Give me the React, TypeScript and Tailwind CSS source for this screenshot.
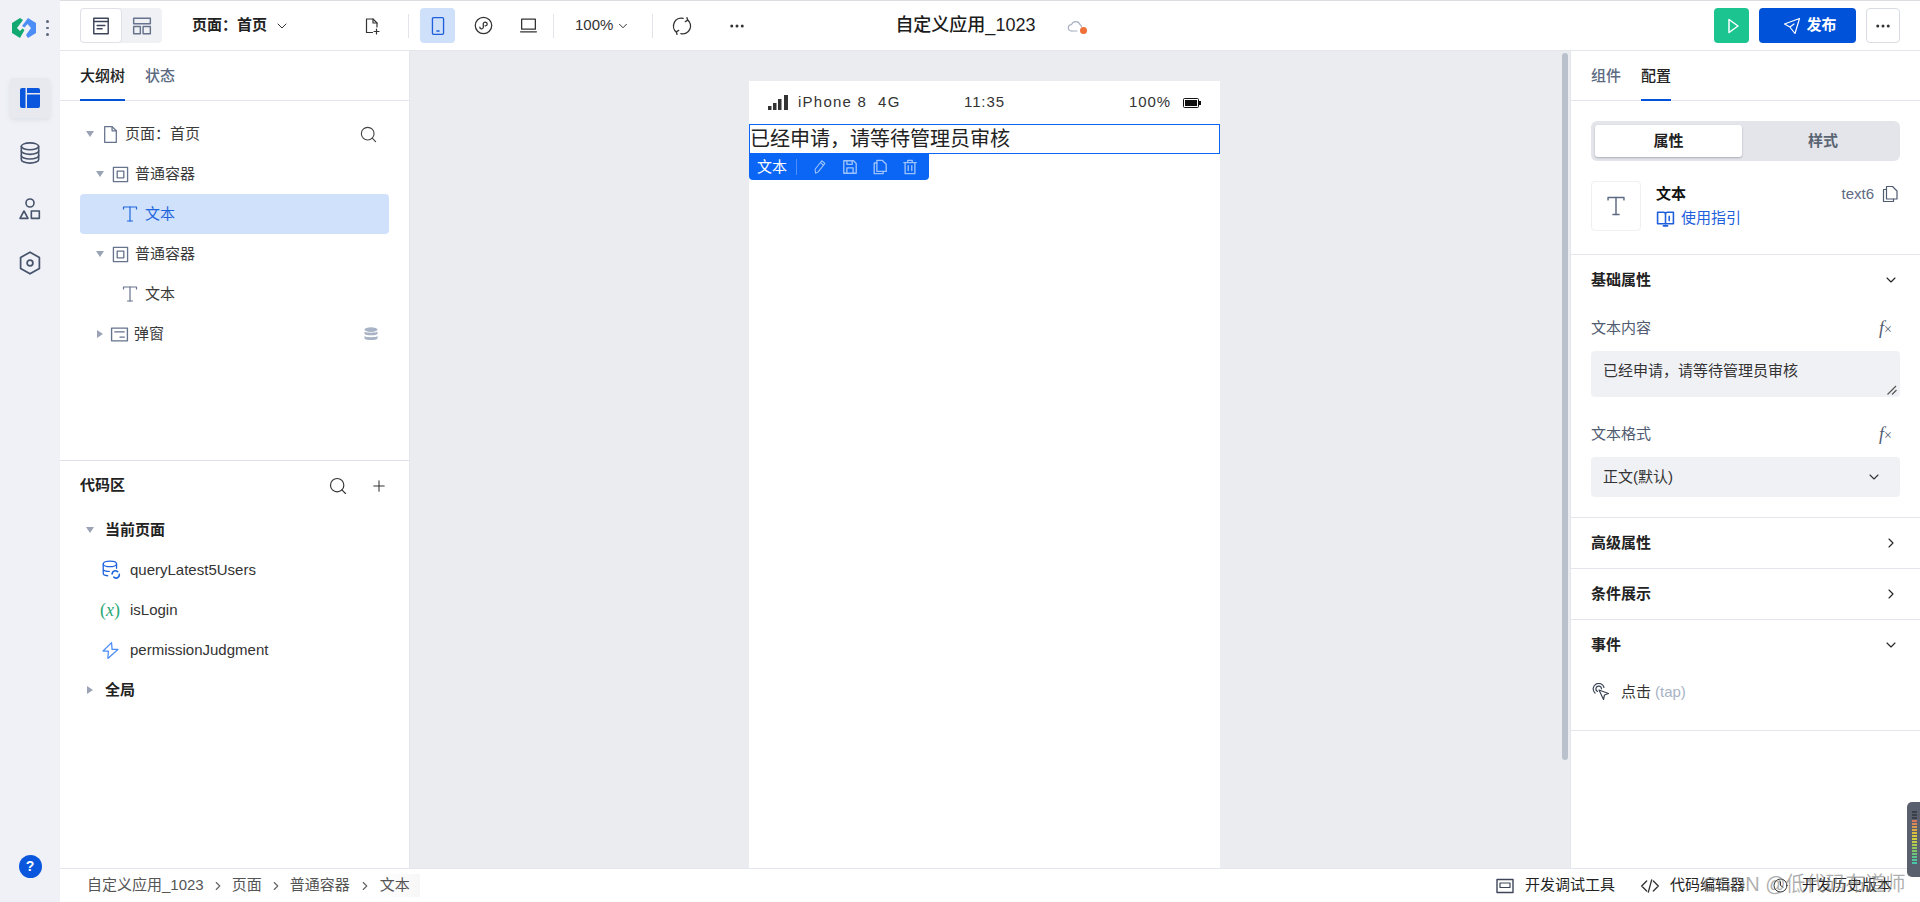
import {
  ChevronDown,
  ChevronRight,
  Ellipsis,
  Plus,
  Search,
} from 'lucide-react';
import type { ReactNode } from 'react';

const FONT = "font-['Liberation_Sans','Noto_Sans_CJK_SC',sans-serif]";

function Svg({ size = 18, children, className = '' }: { size?: number; children: ReactNode; className?: string }) {
  return (
    <svg
      width={size}
      height={size}
      viewBox="0 0 18 18"
      fill="none"
      stroke="currentColor"
      strokeWidth="1.2"
      strokeLinecap="round"
      strokeLinejoin="round"
      className={`shrink-0 ${className}`}
    >
      {children}
    </svg>
  );
}

function Logo() {
  return (
    <svg width="24" height="20" viewBox="0 0 24 20" className="shrink-0">
      <path d="M0 5 L8 0 L11 2 L5 10 L8 13 L10.5 10.5 L12.5 12 L8 20 L0 15 Z" fill="#12a871" />
      <path d="M24 5 L16 0 L10 8 L12.5 9.5 L15.5 6 L19 10 L14 17 L16 20 L24 15 Z" fill="#4d8df6" />
    </svg>
  );
}

function FileIcon({ size = 18 }: { size?: number }) {
  return (
    <Svg size={size}>
      <path d="M3.5 1.5 H10.5 L14.5 5.5 V16.5 H3.5 Z" />
      <path d="M10.5 1.5 V5.5 H14.5" />
    </Svg>
  );
}

function TextIcon({ size = 18, className = '' }: { size?: number; className?: string }) {
  return (
    <Svg size={size} className={className}>
      <path d="M2.5 4 V2 H15.5 V4" />
      <path d="M9 2 V16" />
      <path d="M6.5 16 H11.5" />
    </Svg>
  );
}

function ContainerIcon() {
  return (
    <Svg size={17} className="text-[#66738c]">
      <rect x="1.5" y="1.5" width="15" height="15" strokeWidth="1.4" />
      <rect x="5.5" y="5.5" width="7" height="7" strokeWidth="1.4" />
    </Svg>
  );
}

function Tri({ open = true }: { open?: boolean }) {
  return (
    <span
      className={
        open
          ? 'h-0 w-0 shrink-0 border-x-[4px] border-t-[6px] border-x-transparent border-t-[#9aa3b5]'
          : 'h-0 w-0 shrink-0 border-y-[4px] border-l-[6px] border-y-transparent border-l-[#9aa3b5]'
      }
    />
  );
}

function Rail() {
  return (
    <aside className="flex w-[60px] shrink-0 flex-col items-center bg-[#eff1f6] text-[#46536b]">
      <div className="mt-[18px] flex h-5 w-full items-center pl-3">
        <Logo />
        <span className="ml-[10px] flex flex-col gap-[4px]">
          <i className="block h-[2.5px] w-[2.5px] rounded-full bg-[#59657a]" />
          <i className="block h-[2.5px] w-[2.5px] rounded-full bg-[#59657a]" />
          <i className="block h-[2.5px] w-[2.5px] rounded-full bg-[#59657a]" />
        </span>
      </div>
      <div className="mt-10 flex h-10 w-10 items-center justify-center rounded-[4px] bg-[#e7e9ef] shadow-[0_2px_5px_rgba(100,110,130,0.12)]">
        <svg width="20" height="20" viewBox="0 0 20 20" className="text-[#0a56dd]">
          <path d="M2 0 H5.5 V20 H2 A2 2 0 0 1 0 18 V2 A2 2 0 0 1 2 0 Z" fill="currentColor" />
          <path d="M7 0 H18 A2 2 0 0 1 20 2 V5 H7 Z" fill="currentColor" />
          <path d="M7 6.5 H20 V18 A2 2 0 0 1 18 20 H7 Z" fill="currentColor" />
        </svg>
      </div>
      <div className="mt-[20px] flex h-[30px] items-center">
        <Svg size={24}>
          <ellipse cx="9" cy="4" rx="6.5" ry="2.6" />
          <path d="M2.5 4 V14 C2.5 15.4 5.4 16.6 9 16.6 C12.6 16.6 15.5 15.4 15.5 14 V4" />
          <path d="M2.5 7.5 C2.5 8.9 5.4 10 9 10 C12.6 10 15.5 8.9 15.5 7.5" />
          <path d="M2.5 11 C2.5 12.4 5.4 13.5 9 13.5 C12.6 13.5 15.5 12.4 15.5 11" />
        </Svg>
      </div>
      <div className="mt-[26px] flex h-[30px] items-center">
        <Svg size={24}>
          <circle cx="9" cy="4.5" r="3" />
          <path d="M4.5 10.5 L7.5 16 H1.5 Z" />
          <rect x="10" y="10.5" width="6" height="5.5" />
        </Svg>
      </div>
      <div className="mt-[24px] flex h-[30px] items-center">
        <Svg size={26}>
          <path d="M9 1.5 L15.5 5.2 V12.8 L9 16.5 L2.5 12.8 V5.2 Z" />
          <circle cx="9" cy="9" r="2" />
        </Svg>
      </div>
      <div className="mt-auto mb-[24px] flex h-[23px] w-[23px] items-center justify-center rounded-full bg-[#0a56dd] text-[14px] font-bold text-white">
        ?
      </div>
    </aside>
  );
}

function ToolSep() {
  return <span className="block h-6 w-px shrink-0 bg-[#e3e5ea]" />;
}

function TopBar() {
  return (
    <header className="flex h-[51px] shrink-0 items-center border-t border-b border-t-[#dcdde0] border-b-[#e4e6eb] bg-white text-[#333]">
      <div className="ml-5 flex h-[35px] w-[82px] rounded-[4px] bg-[#f0f1f5]">
        <span className="flex w-[42px] items-center justify-center rounded-[4px] border border-[#dfe1e7] bg-white text-[#3d4658]">
          <Svg size={20}>
            <rect x="2.5" y="2" width="13" height="14" strokeWidth="1.3" />
            <path d="M2.5 5 H15.5 M5.5 8.5 H12.5 M5.5 11.5 H10" strokeWidth="1.3" />
          </Svg>
        </span>
        <span className="flex flex-1 items-center justify-center text-[#66738c]">
          <Svg size={20}>
            <rect x="1.5" y="2" width="15" height="5" strokeWidth="1.3" />
            <rect x="1.5" y="9.5" width="6" height="6.5" strokeWidth="1.3" />
            <rect x="10" y="9.5" width="6.5" height="6.5" strokeWidth="1.3" />
          </Svg>
        </span>
      </div>
      <span className="ml-[30px] w-[75px] text-[15px] font-bold text-[#222]">页面：首页</span>
      <ChevronDown size={16} strokeWidth={1.5} className="ml-[7px] text-[#333]" />
      <span className="ml-[73px] text-[#333]">
        <Svg size={18}>
          <path d="M9.5 15.5 H3.5 V2 H10 L14 6 V10" />
          <path d="M10 2 V6 H14" />
          <path d="M13.5 12 V17 M11 14.5 H16" />
        </Svg>
      </span>
      <span className="ml-[27px]">
        <ToolSep />
      </span>
      <span className="ml-[11px] flex h-[35px] w-[35px] items-center justify-center rounded-[4px] bg-[#cfe0fb] text-[#1f5fdc]">
        <Svg size={20}>
          <rect x="4" y="1.5" width="10" height="15" rx="1" />
          <path d="M8 13.5 H10" />
        </Svg>
      </span>
      <span className="ml-[19px] text-[#333]">
        <Svg size={19}>
          <circle cx="9" cy="9" r="7.8" />
          <path d="M5.5 10.5 C5.5 12.5 8 13 8.8 11 V7 C9.5 5 12.5 5.5 12.5 7.5 C12.5 9 11 9.5 10.5 9.3" />
        </Svg>
      </span>
      <span className="ml-[26px] text-[#333]">
        <Svg size={19}>
          <rect x="2.5" y="3" width="13" height="9.5" />
          <path d="M1.5 15 H16.5" />
        </Svg>
      </span>
      <span className="ml-[15px]">
        <ToolSep />
      </span>
      <span className="ml-[21px] text-[15px] text-[#333]">100%</span>
      <ChevronDown size={14} strokeWidth={1.7} className="ml-[3px] text-[#333]" />
      <span className="ml-[22px]">
        <ToolSep />
      </span>
      <span className="ml-[19px] text-[#333]">
        <Svg size={20}>
          <path d="M4 14.5 A7 7 0 0 1 10 2.2" />
          <path d="M14 3.5 A7 7 0 0 1 8 15.8" />
          <path d="M13.5 1.5 L14 3.8 L12 5" />
          <path d="M4.5 16.5 L4 14.2 L6 13" />
        </Svg>
      </span>
      <Ellipsis size={18} className="ml-[36px]" />
      <span className="ml-[149px] text-[18px] font-medium text-[#1c1c1c]">自定义应用_1023</span>
      <span className="relative ml-[32px] text-[#a9b2c2]">
        <Svg size={18}>
          <path d="M5 14 H4.5 A3.2 3.2 0 0 1 4.5 7.6 A4.5 4.5 0 0 1 13 7.5 A3.2 3.2 0 0 1 14.5 10" />
          <path d="M5 14 H10" />
        </Svg>
        <i className="absolute right-[-2px] bottom-[1px] block h-[7px] w-[7px] rounded-full bg-[#f0703a]" />
      </span>
      <span className="ml-[629px] flex h-[35px] w-[35px] items-center justify-center rounded-[4px] bg-[#1cc490] text-white">
        <Svg size={18} className="translate-x-px">
          <path d="M5 2.5 L14 9 L5 15.5 Z" strokeWidth="1.5" />
        </Svg>
      </span>
      <span className="ml-[10px] flex h-[35px] w-[97px] items-center rounded-[4px] bg-[#0052d9] pl-[24px] text-white">
        <Svg size={18}>
          <path d="M16.5 1.5 L1.5 7 L7 10 L11 7 M16.5 1.5 L12 16.5 L8 11.5 L7 10" />
        </Svg>
        <span className="ml-[5px] text-[15px] font-bold">发布</span>
      </span>
      <span className="ml-[10px] flex h-[35px] w-[34px] items-center justify-center rounded-[4px] border border-[#d8dbe3] bg-white text-[#333]">
        <Ellipsis size={18} />
      </span>
    </header>
  );
}

function TreeRow({
  pad,
  children,
  active = false,
}: {
  pad: string;
  children: ReactNode;
  active?: boolean;
}) {
  return (
    <div
      className={`flex h-10 items-center rounded-[4px] text-[15px] ${pad} ${
        active ? 'bg-[#d0e1fb] text-[#1f66dd]' : 'text-[#3a3a3a]'
      }`}
    >
      {children}
    </div>
  );
}

function PanelTabs({ left, right, active }: { left: string; right: string; active: 'left' | 'right' }) {
  const on = 'relative flex h-full items-center pt-[2px] font-medium text-[#222] after:absolute after:bottom-[-1px] after:left-0 after:h-[2px] after:w-full after:bg-[#0052d9]';
  const off = 'flex h-full items-center pt-[2px] font-medium text-[#5c6a82]';
  return (
    <div className="flex h-[50px] shrink-0 gap-5 border-b border-[#e4e6eb] px-5 text-[15px]">
      <span className={active === 'left' ? on : off}>{left}</span>
      <span className={active === 'right' ? on : off}>{right}</span>
    </div>
  );
}

function LeftPanel() {
  return (
    <aside className="flex w-[350px] shrink-0 flex-col border-r border-[#e4e6eb] bg-white">
      <PanelTabs left="大纲树" right="状态" active="left" />
      <div className="h-[359px] shrink-0 px-5 pt-[13px]">
        <TreeRow pad="pl-[6px]">
          <Tri />
          <span className="ml-[7px] text-[#66738c]">
            <FileIcon size={19} />
          </span>
          <span className="ml-[5px]">页面：首页</span>
          <Search size={19} strokeWidth={1.4} className="mr-[11px] ml-auto text-[#444]" />
        </TreeRow>
        <TreeRow pad="pl-4">
          <Tri />
          <span className="ml-[8px] flex">
            <ContainerIcon />
          </span>
          <span className="ml-[6px]">普通容器</span>
        </TreeRow>
        <TreeRow pad="pl-[41px]" active>
          <TextIcon size={18} className="text-[#1f66dd]" />
          <span className="ml-[6px]">文本</span>
        </TreeRow>
        <TreeRow pad="pl-4">
          <Tri />
          <span className="ml-[8px] flex">
            <ContainerIcon />
          </span>
          <span className="ml-[6px]">普通容器</span>
        </TreeRow>
        <TreeRow pad="pl-[41px]">
          <TextIcon size={18} className="text-[#66738c]" />
          <span className="ml-[6px]">文本</span>
        </TreeRow>
        <TreeRow pad="pl-[17px]">
          <Tri open={false} />
          <span className="ml-[7px] text-[#66738c]">
            <Svg size={19}>
              <rect x="1.5" y="3" width="15" height="12" strokeWidth="1.3" />
              <path d="M4.5 6.5 H13.5 M9.5 11.5 H13.5" strokeWidth="1.3" />
            </Svg>
          </span>
          <span className="ml-[5px]">弹窗</span>
          <svg width="14" height="14" viewBox="0 0 14 14" className="mr-[11px] ml-auto" fill="#a9b3c6">
            <ellipse cx="7" cy="2.6" rx="6.5" ry="2.4" />
            <path d="M0.5 4.6 C1.5 6.2 12.5 6.2 13.5 4.6 V7 C12.5 8.8 1.5 8.8 0.5 7 Z" />
            <path d="M0.5 9 C1.5 10.6 12.5 10.6 13.5 9 V11.4 C12.5 13.4 1.5 13.4 0.5 11.4 Z" />
          </svg>
        </TreeRow>
      </div>
      <div className="flex-1 border-t border-[#dfe1e9]">
        <div className="flex h-[49px] items-center pr-[21px] pl-5">
          <span className="text-[15px] font-bold text-[#222]">代码区</span>
          <Search size={20} strokeWidth={1.4} className="mr-[22px] ml-auto text-[#333]" />
          <Plus size={18} strokeWidth={1.4} className="text-[#333]" />
        </div>
        <div className="px-5 text-[15px] text-[#333]">
          <div className="flex h-10 items-center pl-[6px] font-bold text-[#222]">
            <Tri />
            <span className="ml-[11px]">当前页面</span>
          </div>
          <div className="flex h-10 items-center pl-[21px]">
            <span className="text-[#1f66dd]">
              <Svg size={20}>
                <ellipse cx="8" cy="3.5" rx="6" ry="2.5" />
                <path d="M2 3.5 V12 C2 13 3.5 14 6 14.2 M14 3.5 V7.5 M2 8 C2 9.2 4.5 10.2 7.5 10.2" />
                <path d="M10 12.5 A3 3 0 0 1 15 10.5 M16.5 13 A3 3 0 0 1 11.5 15.5" strokeWidth="1.5" />
              </Svg>
            </span>
            <span className="ml-[9px]">queryLatest5Users</span>
          </div>
          <div className="flex h-10 items-center pl-[20px]">
            <span className="flex w-5 justify-center font-['Liberation_Serif',serif] text-[18px] text-[#2aa876]">
              (<span className="italic">x</span>)
            </span>
            <span className="ml-[10px]">isLogin</span>
          </div>
          <div className="flex h-10 items-center pl-[21px]">
            <span className="text-[#4d8df6]">
              <Svg size={19}>
                <path d="M10 1.5 L2 9.5 H7 L6.5 16.5 L16 8 H10.5 Z" />
              </Svg>
            </span>
            <span className="ml-[10px]">permissionJudgment</span>
          </div>
          <div className="flex h-10 items-center pl-[7px] font-bold text-[#222]">
            <Tri open={false} />
            <span className="ml-[12px]">全局</span>
          </div>
        </div>
      </div>
    </aside>
  );
}

function Canvas() {
  return (
    <main className="relative flex min-w-0 flex-1 bg-[#ebecf0] pt-[30px] pl-[339px]">
      <div className="w-[471px] bg-white">
        <div className="flex h-[43px] items-center pl-[19px] text-[15px] tracking-[0.9px] text-[#333]">
          <svg width="20" height="15" viewBox="0 0 20 15" fill="#333" className="shrink-0">
            <rect x="0" y="11" width="3.5" height="4" />
            <rect x="5" y="8" width="3.5" height="7" />
            <rect x="10" y="4" width="3.5" height="11" />
            <rect x="16" y="0" width="4" height="15" />
          </svg>
          <span className="ml-[10px] w-[166px] tracking-[1.25px] whitespace-pre">iPhone 8  4G</span>
          <span className="w-[165px]">11:35</span>
          <span className="w-[54px]">100%</span>
          <svg width="18" height="10" viewBox="0 0 18 10" className="shrink-0">
            <rect x="0.5" y="0.5" width="15" height="9" rx="1" fill="#fff" stroke="#111" />
            <rect x="2" y="2" width="12" height="6" fill="#111" />
            <rect x="16" y="3" width="2" height="4" fill="#111" />
          </svg>
        </div>
        <div className="h-[30px] border border-[#0b66f5] text-[20px] leading-[28px] text-[#222]">
          已经申请，请等待管理员审核
        </div>
        <div className="flex h-[26px] w-[180px] items-center rounded-b-[4px] bg-[#0b66f5] pl-2 text-[15px] text-white">
          <span className="w-[30px]">文本</span>
          <span className="ml-[9px] h-4 w-px bg-[#4d8ff8]" />
          <span className="ml-[15px] text-[#9cc3fb]">
            <Svg size={16}>
              <path d="M4 16 L3.5 11.5 L11 2 L14.5 5 L7 14.5 Z" />
              <path d="M9.5 4 L13 7" />
            </Svg>
          </span>
          <span className="ml-[14px] text-[#9cc3fb]">
            <Svg size={16}>
              <path d="M2 2 H13 L16 5 V16 H2 Z" strokeWidth="1.5" />
              <path d="M5.5 2 V6 H11.5 V2 M5.5 16 V10 H12.5 V16" strokeWidth="1.5" />
            </Svg>
          </span>
          <span className="ml-[14px] text-[#9cc3fb]">
            <Svg size={16}>
              <path d="M5.5 1.5 H11.5 L16 6 V14 H5.5 Z" strokeWidth="1.5" />
              <path d="M5.5 4.5 H2.5 V16.5 H12.5 V14" strokeWidth="1.5" />
            </Svg>
          </span>
          <span className="ml-[14px] text-[#9cc3fb]">
            <Svg size={16}>
              <path d="M2 4 H16 M6.5 4 V1.5 H11.5 V4 M3.5 4 V16.5 H14.5 V4 M7 7.5 V13 M11 7.5 V13" strokeWidth="1.5" />
            </Svg>
          </span>
        </div>
      </div>
      <span className="absolute top-[2px] right-[2px] h-[707px] w-[6px] rounded-[3px] bg-[#b8c1cc]" />
    </main>
  );
}

function SectionHead({ title, open = false }: { title: string; open?: boolean }) {
  return (
    <div className="flex h-[50px] items-center justify-between pr-[21px] pl-5 text-[15px] font-bold text-[#222]">
      <span>{title}</span>
      {open ? <ChevronDown size={16} strokeWidth={1.6} /> : <ChevronRight size={16} strokeWidth={1.6} />}
    </div>
  );
}

function FxLabel({ label }: { label: string }) {
  return (
    <div className="flex h-[23px] items-center justify-between pr-[8px] text-[15px] text-[#4f5b70]">
      <span>{label}</span>
      <span className="font-['Liberation_Serif',serif] text-[18px] text-[#4f5b70] italic">
        f<span className="text-[14px] not-italic">×</span>
      </span>
    </div>
  );
}

function RightPanel() {
  return (
    <aside className="flex w-[350px] shrink-0 flex-col border-l border-[#e4e6eb] bg-white">
      <PanelTabs left="组件" right="配置" active="right" />
      <div className="h-[154px] shrink-0 border-b border-[#e4e6eb] px-5 pt-5">
        <div className="flex h-10 rounded-[6px] bg-[#e3e5ea] p-1 text-[15px] font-bold">
          <span className="flex w-[147px] items-center justify-center rounded-[3px] bg-white text-[#222] shadow-[0_1px_2px_rgba(80,90,110,0.4)]">属性</span>
          <span className="flex flex-1 items-center justify-center pl-[8px] text-[#5a6473]">样式</span>
        </div>
        <div className="mt-5 flex">
          <span className="flex h-[50px] w-[50px] items-center justify-center rounded-[4px] border border-[#f0f0f3] text-[#5c6a82]">
            <TextIcon size={22} />
          </span>
          <div className="ml-[15px] flex-1 pt-[2px]">
            <div className="flex h-[22px] items-center text-[15px]">
              <span className="font-bold text-[#111]">文本</span>
              <span className="ml-auto text-[#5c6a82]">text6</span>
              <span className="mr-[1px] ml-[7px] text-[#4f5b70]">
                <Svg size={18}>
                  <path d="M5.5 1.5 H11.5 L16 6 V14 H5.5 Z" />
                  <path d="M5.5 4.5 H2.5 V16.5 H12.5 V14" />
                </Svg>
              </span>
            </div>
            <div className="mt-[2px] flex h-[22px] items-center text-[15px] text-[#1f5fdc]">
              <Svg size={19}>
                <path d="M1.5 3 H7 C8 3 9 3.6 9 4.5 C9 3.6 10 3 11 3 H16.5 V14 H1.5 Z" strokeWidth="1.5" />
                <path d="M9 4.5 V14 M12.5 7 V11 M7 16 H11" strokeWidth="1.5" />
              </Svg>
              <span className="ml-[6px]">使用指引</span>
            </div>
          </div>
        </div>
      </div>
      <div className="h-[263px] shrink-0 border-b border-[#e4e6eb]">
        <SectionHead title="基础属性" open />
        <div className="px-5 pt-[12px]">
          <FxLabel label="文本内容" />
          <div className="relative mt-[11px] h-[46px] rounded-[4px] bg-[#f0f1f5] px-3 pt-[9px] text-[15px] leading-[22px] text-[#333]">
            已经申请，请等待管理员审核
            <svg width="10" height="10" viewBox="0 0 10 10" className="absolute right-[3px] bottom-[2px]" stroke="#555" strokeWidth="1.2">
              <path d="M0.5 9.5 L9 1 M5 9.5 L9.5 5" />
            </svg>
          </div>
          <div className="mt-[26px]">
            <FxLabel label="文本格式" />
          </div>
          <div className="mt-[11px] flex h-10 items-center justify-between rounded-[4px] bg-[#f0f1f5] pr-[18px] pl-3 text-[15px] text-[#333]">
            <span>正文(默认)</span>
            <ChevronDown size={16} strokeWidth={1.6} />
          </div>
        </div>
      </div>
      <div className="border-b border-[#e4e6eb]">
        <SectionHead title="高级属性" />
      </div>
      <div className="border-b border-[#e4e6eb]">
        <SectionHead title="条件展示" />
      </div>
      <div className="h-[111px] shrink-0 border-b border-[#e4e6eb]">
        <SectionHead title="事件" open />
        <div className="mt-[2px] flex h-10 items-center pl-[21px] text-[15px] text-[#333]">
          <Svg size={18} className="text-[#3d4658]">
            <path d="M3 10 A5.5 5.5 0 1 1 12 4.5" />
            <path d="M5.5 8.5 A2.8 2.8 0 1 1 9.5 5.8" />
            <path d="M7 7 L16.5 10.5 L12.5 12 L11.5 16.5 Z" />
          </Svg>
          <span className="ml-[11px]">点击</span>
          <span className="ml-[4px] text-[#a9b3c6]">(tap)</span>
        </div>
      </div>
    </aside>
  );
}

function BottomBar() {
  return (
    <footer className="flex h-[34px] shrink-0 items-center border-t border-[#e4e6eb] bg-white pl-[27px] text-[15px]">
      <span className="text-[#555]">自定义应用_1023</span>
      <ChevronRight size={14} className="mx-[7px] text-[#666]" />
      <span className="text-[#555]">页面</span>
      <ChevronRight size={14} className="mx-[7px] text-[#666]" />
      <span className="text-[#555]">普通容器</span>
      <ChevronRight size={14} className="mx-[8px] text-[#666]" />
      <span className="bg-gradient-to-r from-white to-[#f7f7f8] pr-[10px] text-[#555]">文本</span>
      <span className="ml-auto text-[#3d4658]">
        <Svg size={18}>
          <rect x="1" y="2.5" width="16" height="13" strokeWidth="1.4" />
          <rect x="4" y="6" width="10" height="4.5" strokeWidth="1.2" />
        </Svg>
      </span>
      <span className="ml-[11px] text-[#222]">开发调试工具</span>
      <span className="ml-[25px] text-[#333]">
        <Svg size={20}>
          <path d="M6 4.5 L1.5 9 L6 13.5 M12 4.5 L16.5 9 L12 13.5 M10.5 3.5 L7.5 14.5" />
        </Svg>
      </span>
      <span className="ml-[10px] text-[#222]">代码编辑器</span>
      <span className="ml-[28px] text-[#333]">
        <Svg size={15}>
          <circle cx="9" cy="9" r="7.8" />
          <path d="M9 4.5 V9 L12 11" />
        </Svg>
      </span>
      <span className="mr-[28px] ml-[14px] text-[#222]">开发历史版本</span>
    </footer>
  );
}

const METER = [
  '#3b3f49', '#3b3f49', '#3b3f49',
  '#d9775a', '#d9885a', '#d99a4e', '#d9aa46', '#d9bb40', '#d6c83c', '#cfd03c',
  '#bfd044', '#a9cc52', '#94c95e', '#7fc76a', '#6bc67a', '#5cc68a', '#50c69a', '#48c6aa',
];

function Overlays() {
  return (
    <>
      <span className="absolute top-[872px] left-[1703px] text-[20px] leading-6 whitespace-nowrap text-[rgba(120,120,120,0.6)]">
        CSDN @低代码布道师
      </span>
      <div className="absolute top-[802px] right-0 flex h-[75px] w-[13px] flex-col gap-[1px] rounded-l-[5px] bg-[#5b606e] py-[9px] pl-[5px]">
        {METER.map((color, i) => (
          <i key={i} className="block h-[2px] w-[5px]" style={{ backgroundColor: color }} />
        ))}
      </div>
    </>
  );
}

export default function App() {
  return (
    <div className={`relative flex h-[902px] w-[1920px] overflow-hidden bg-white ${FONT}`}>
      <Rail />
      <div className="flex min-w-0 flex-1 flex-col">
        <TopBar />
        <div className="flex min-h-0 flex-1">
          <LeftPanel />
          <Canvas />
          <RightPanel />
        </div>
        <BottomBar />
      </div>
      <Overlays />
    </div>
  );
}
